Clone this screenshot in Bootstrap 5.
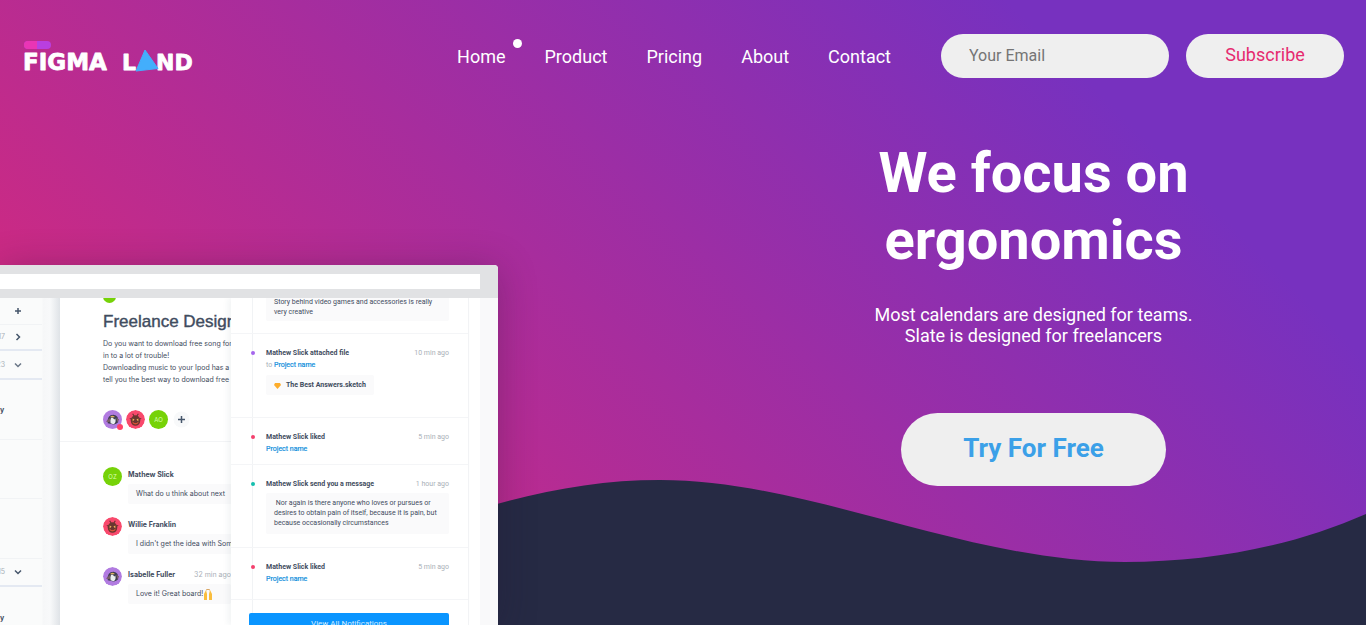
<!DOCTYPE html>
<html lang="en">
<head>
<meta charset="utf-8">
<meta name="viewport" content="width=device-width, initial-scale=1">
<title>Figma Land</title>
<link rel="stylesheet" href="https://cdn.jsdelivr.net/npm/bootstrap@5.3.0/dist/css/bootstrap.min.css">
<style>
  body { font-family: Roboto, "Liberation Sans", sans-serif; background: #262a44; }
  .landing { min-height: 100vh; background: linear-gradient(45deg, #e32873 0%, #7731bf 82%); isolation: isolate; }
  .wave { height: 145px; z-index: -1; }
  .topbar { padding: 34px 22px 0 24px; }
  .menu { gap: 39px; margin-right: 50px; padding-top: 2px; font-size: 18px; line-height: 24px; }
  .menu a { color: #fff; text-decoration: none; }
  .dot { width: 9px; height: 9px; top: -6px; right: -16px; }
  .signup { gap: 17px; }
  .field { width: 228px; height: 44px; padding: 0 28px 2px; border: 0; background: #efefef; font-size: 16px; color: #333; }
  .field::placeholder { color: #757575; opacity: 1; }
  .pill { border: 0; background: #efefef; padding: 0 0 3px; }
  .pill-sm { width: 158px; height: 44px; font-size: 18px; color: #e62b6f; }
  .pill-lg { width: 265px; height: 73px; font-size: 26px; font-weight: 700; color: #3ba0e8; margin-top: 67px; }
  .pitch { padding: 62px 0 48px 18px; }
  .pitch h1 { font-size: 56px; font-weight: 700; line-height: 67px; max-width: 340px; margin-bottom: 30px; }
  .pitch p { font-size: 18px; line-height: 21px; }

  /* Product preview */
  .preview-col { padding-top: 187px; }
  .window { width: 498px; max-width: 100%; flex: 1 1 0; border-radius: 0 4px 0 0; background: #fff; box-shadow: 0 4px 38px rgba(30,20,50,.3); color: #3f4c60; font-family: Inter, "Liberation Sans", sans-serif; font-size: 7px; line-height: 12px; }
  .address { height: 33px; padding: 9px 18px 9px 0; background: #e1e2e4; }
  .panes { flex: 1 1 0; }
  .side { width: 60px; background: linear-gradient(90deg, #fafbfb 42px, #f6f7f8 43px, #f8f9fa 50px, #dfe3e7 100%); }
  .side > div { width: 42px; padding-right: 20px; border-bottom: 1px solid #f1f3f5; color: #a9b0b8; gap: 9px; }
  .side svg { width: 8px; height: 8px; flex: none; }
  .side .bar { border-bottom: 2px solid #e4e9f2; }
  .story { width: 171px; white-space: nowrap; }
  .story .head { height: 144px; padding-left: 43px; border-bottom: 1px solid #f3f4f6; display: flow-root; }
  .owner { height: 10px; font-size: 6px; line-height: 6px; gap: 3px; margin-top: -7px; }
  .face { width: 19px; height: 19px; flex: none; border-radius: 50%; font-size: 6px; color: #d9ffb0; }
  .face-green { background: #76d208; }
  .face-sm { width: 13px; height: 13px; }
  .doc-title { font-family: "Liberation Sans", sans-serif; font-size: 17px; line-height: 22px; margin: 10px 0 5px; font-weight: 400; -webkit-text-stroke: .4px #3f4c60; }
  .people { gap: 4px; margin-top: 24px; }
  .comments { padding: 25px 0 0 43px; gap: 12px; }
  .comment { height: 38px; gap: 6px; }
  .who { margin-top: 2px; line-height: 12px; }
  .bubble { background: #fafafb; padding: 4px 8px; margin-top: 3px; border-radius: 2px; }
  .muted { color: #a9afb7; }
  .feed { width: 237px; padding: 0 19px 0 35px; font-family: Roboto, sans-serif; box-shadow: -3px 0 6px rgba(40,60,80,.06); background: linear-gradient(90deg, transparent 21px, #f1f3f5 21px, #f1f3f5 22px, transparent 22px) #fff; }
  .entry { padding-top: 13px; border-bottom: 1px solid #f4f5f7; margin: 0 -19px 0 -35px; padding-left: 35px; padding-right: 19px; }
  .entry a { color: #1590dd; text-decoration: none; -webkit-text-stroke: .2px #1590dd; }
  .entry .bubble { line-height: 10px; padding: 5px 8px; margin-top: 4px; }
  .e-first { height: 38px; padding-top: 0; }
  .e-first .bubble { margin-top: -2px; height: 25px; padding-top: 1px; }
  .e-file { height: 84px; } .e-like { height: 47px; } .e-note { height: 83px; } .e-last { height: 52px; }
  .e-note .bubble { height: 41px; margin-top: 3px; }
  .tick { width: 4px; height: 4px; left: 20px; top: 17px; border-radius: 50%; }
  .all { margin: 13px 0 0 -17px; width: 200px; height: 21px; border: 0; background: #0a95ff; color: #d5edff; border-radius: 2px 2px 0 0; font-size: 8px; }
  .gutter { width: 12px; border-left: 1px solid #f3f4f6; }
  .edge { background: #f9f9fa; }
</style>
</head>
<body>
<svg width="0" height="0" class="position-absolute" aria-hidden="true">
  <symbol id="penguin" viewBox="0 0 20 20"><circle cx="10" cy="10" r="10" fill="#b17be0"/><path d="M5 14Q4 5 11 5Q17 6 16 13Q13 16 10 15Z" fill="#3c3e50"/><path d="M8 14Q7 8 10 8L12 10L13 9Q14 14 11 15Z" fill="#e9edf0"/><path d="M8 7.500Q10 6 12 7.500" stroke="#e0b060" stroke-width="1.200" fill="none"/><path d="M3 12L8 8L7 13ZM14 8L17 10L15 13Z" fill="#7a5d67"/></symbol>
  <symbol id="beetle" viewBox="0 0 20 20"><circle cx="10" cy="10" r="10" fill="#f8496c"/><path d="M7 4L9 7M13 4L11 7M4 9L7 10M16 9L13 10" stroke="#693330" stroke-width="1.200"/><ellipse cx="10" cy="11" rx="5" ry="5.500" fill="#69362f"/><path d="M7 9L9 10L7 12ZM13 9L11 10L13 12Z" fill="#f2b45d"/><path d="M7 13Q10 16 13 13" stroke="#d65135" stroke-width="1.400" fill="none"/></symbol>
</svg>

<div class="landing position-relative d-flex flex-column overflow-hidden">
  <svg class="wave position-absolute bottom-0 start-0 w-100" viewBox="0 480 1366 145" preserveAspectRatio="none" aria-hidden="true">
    <path fill="#262a44" d="M0 625V600Q200 600 400 535C500 500 575 480 660 480C810 480 965 562 1125 562C1215 562 1295 545 1366 514V625Z"/>
  </svg>

  <header class="topbar d-flex align-items-center">
    <a href="#" class="me-auto" aria-label="Figma Land">
      <svg class="d-block" width="170" height="36" viewBox="0 0 170 36">
        <rect x="0" y="3" width="27" height="8" rx="4" fill="#b93fe0"/>
        <path d="M4 3H13V11H4A4 4 0 0 1 4 3Z" fill="#e935b5"/>
        <g fill="#fff" stroke="#fff" stroke-width=".8" stroke-linejoin="round" font-family="DejaVu Sans" font-weight="700" font-size="22"><text x="-1" y="32" font-size="23">FIGMA</text><text x="98" y="32">L</text><text x="132" y="32">ND</text></g>
        <path d="M121 12L134 30.500L112 33Z" fill="#43aefc" stroke="#43aefc" stroke-linejoin="round"/>
      </svg>
    </a>
    <nav class="menu d-flex">
      <a href="#" class="position-relative">Home<span class="dot position-absolute rounded-circle bg-white"></span></a>
      <a href="#">Product</a>
      <a href="#">Pricing</a>
      <a href="#">About</a>
      <a href="#">Contact</a>
    </nav>
    <form class="signup d-flex">
      <input type="email" class="field rounded-pill" placeholder="Your Email" aria-label="Your Email">
      <button type="button" class="pill pill-sm rounded-pill">Subscribe</button>
    </form>
  </header>

  <main class="row g-0 flex-grow-1">
    <div class="preview-col col-6 d-flex flex-column">
      <div class="window d-flex flex-column overflow-hidden">
        <div class="address"><div class="bg-white h-100"></div></div>
        <div class="panes d-flex overflow-hidden">
          <div class="side flex-shrink-0">
            <div class="d-flex justify-content-end align-items-center" style="height:27px"><svg viewBox="0 0 8 8" stroke="#46566b" stroke-width="1.500"><path d="M4 1V7M1 4H7"/></svg></div>
            <div class="bar d-flex justify-content-end align-items-center" style="height:26px">17<svg viewBox="0 0 8 8" fill="none" stroke="#46566b" stroke-width="1.500"><path d="M2.500 1L5.500 4L2.500 7"/></svg></div>
            <div class="bar d-flex justify-content-end align-items-center" style="height:29px">23<svg viewBox="0 0 8 8" fill="none" stroke="#6a7687" stroke-width="1.500"><path d="M1 2.500L4 5.500L7 2.500"/></svg></div>
            <div class="d-flex justify-content-start align-items-center fw-bold" style="height:60px;color:#3f4c60">y</div>
            <div style="height:59px"></div>
            <div style="height:60px"></div>
            <div class="bar d-flex justify-content-end align-items-center" style="height:28px">15<svg viewBox="0 0 8 8" fill="none" stroke="#46566b" stroke-width="1.500"><path d="M1 2.500L4 5.500L7 2.500"/></svg></div>
            <div class="d-flex justify-content-start align-items-center fw-bold" style="height:62px;color:#3f4c60">y</div>
          </div>
          <div class="story flex-shrink-0 overflow-hidden">
            <div class="head">
              <div class="owner d-flex align-items-center"><span class="face face-sm face-green"></span><span>Sam Satterfield</span></div>
              <h2 class="doc-title">Freelance Design</h2>
              <div>Do you want to download free song for<br>in to a lot of trouble!<br>Downloading music to your Ipod has a<br>tell you the best way to download free</div>
              <div class="people d-flex align-items-center">
                <svg class="face overflow-visible"><use href="#penguin"/><circle cx="17" cy="17" r="3" fill="#ff4268"/></svg>
                <svg class="face"><use href="#beetle"/></svg>
                <span class="face face-green d-flex align-items-center justify-content-center">AO</span>
                <svg class="face" viewBox="0 0 19 19"><circle cx="9.500" cy="9.500" r="8" fill="#f8f9fa"/><path d="M9.500 6V13M6 9.500H13" stroke="#46566b" stroke-width="1.500"/></svg>
              </div>
            </div>
            <div class="comments d-flex flex-column">
              <div class="comment d-flex"><span class="face face-green d-flex align-items-center justify-content-center">OZ</span><div class="flex-grow-1"><div class="who fw-bold">Mathew Slick</div><div class="bubble">What do u think about next</div></div></div>
              <div class="comment d-flex"><svg class="face"><use href="#beetle"/></svg><div class="flex-grow-1"><div class="who fw-bold">Willie Franklin</div><div class="bubble">I didn't get the idea with Som</div></div></div>
              <div class="comment d-flex"><svg class="face"><use href="#penguin"/></svg><div class="flex-grow-1"><div class="who d-flex justify-content-between"><b>Isabelle Fuller</b><span class="muted">32 min ago</span></div><div class="bubble d-flex align-items-center">Love it! Great board!<svg width="10" height="11" viewBox="0 0 10 11"><path d="M1 11V5L3 1L4 5V11ZM9 11V5L7 1L6 5V11Z" fill="#f9bd3e"/><path d="M3 1Q5-.5 7 1" stroke="#d7a25c" fill="none"/></svg></div></div></div>
            </div>
          </div>
          <div class="feed flex-shrink-0 position-relative">
            <div class="entry e-first"><div class="bubble">Story behind video games and accessories is really<br>very creative</div></div>
            <div class="entry e-file position-relative"><span class="tick position-absolute" style="background:#a566ec"></span>
              <div class="d-flex justify-content-between"><b>Mathew Slick attached file</b><span class="muted">10 min ago</span></div>
              <div><span class="muted">to</span> <a href="#">Project name</a></div>
              <div class="bubble d-inline-flex align-items-center fw-bold"><svg class="me-1" width="8" height="7" viewBox="0 0 8 7"><path d="M1 1H6L7 3L3.500 7L0 3Z" fill="#fdad2c"/></svg>The Best Answers.sketch</div>
            </div>
            <div class="entry e-like position-relative"><span class="tick position-absolute" style="background:#f4406d"></span>
              <div class="d-flex justify-content-between"><b>Mathew Slick liked</b><span class="muted">5 min ago</span></div><a href="#">Project name</a></div>
            <div class="entry e-note position-relative"><span class="tick position-absolute" style="background:#14bfae"></span>
              <div class="d-flex justify-content-between"><b>Mathew Slick send you a message</b><span class="muted">1 hour ago</span></div>
              <div class="bubble">&nbsp;Nor again is there anyone who loves or pursues or<br>desires to obtain pain of itself, because it is pain, but<br>because occasionally circumstances</div></div>
            <div class="entry e-last position-relative"><span class="tick position-absolute" style="background:#f4406d"></span>
              <div class="d-flex justify-content-between"><b>Mathew Slick liked</b><span class="muted">5 min ago</span></div><a href="#">Project name</a></div>
            <button type="button" class="all">View All Notifications</button>
          </div>
          <div class="gutter flex-shrink-0"></div>
          <div class="edge flex-grow-1"></div>
        </div>
      </div>
    </div>
    <div class="pitch col-6 d-flex flex-column align-items-center text-center text-white">
      <h1>We focus on ergonomics</h1>
      <p class="mb-0">Most calendars are designed for teams.<br>Slate is designed for freelancers</p>
      <button type="button" class="pill pill-lg rounded-pill">Try For Free</button>
    </div>
  </main>
</div>
<script src="https://cdn.jsdelivr.net/npm/bootstrap@5.3.0/dist/js/bootstrap.bundle.min.js"></script>
</body>
</html>
